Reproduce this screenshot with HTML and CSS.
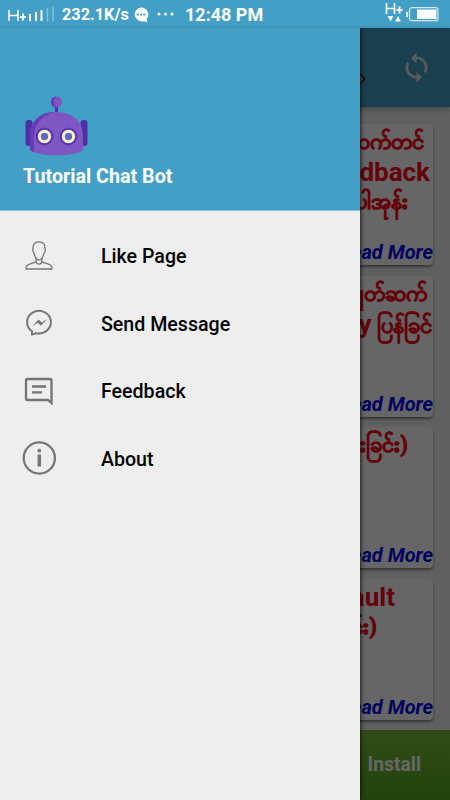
FILE: index.html
```html
<!DOCTYPE html>
<html lang="en">
<head>
    <meta charset="UTF-8">
    <meta name="viewport" content="width=device-width, initial-scale=1.0">
    <title>Tutorial Chat Bot</title>
    <link rel="stylesheet" href="styles.css">
</head>
<body>

    <!-- Status bar -->
    <div class="status-bar">
        <svg class="signal" width="48" height="16" viewBox="0 0 48 16">
            <path d="M1 3v11M10 3v11M1 8.500h9" stroke="#fff" stroke-width="1.500" fill="none"/>
            <path d="M15 6.500v7M12 10h6" stroke="#fff" stroke-width="2" fill="none"/>
            <path d="M22 14V7M28 14V5M33.500 14V3" stroke="#fff" stroke-width="2"/>
            <path d="M39.500 14V1M45 14V0" stroke="#fff" stroke-width="1.500" opacity=".35"/>
        </svg>
        <span class="speed">232.1K/s</span>
        <svg class="bubble" width="16" height="16" viewBox="0 0 16 16">
            <path d="M8 .5a7.500 7 0 1 0 3 13.700l3.500 1.300-.7-3.700A7 7 0 0 0 8 .5z" fill="#fff"/>
            <path d="M3.700 7.500h2M7 7.500h2M10.300 7.500h2" stroke="#439fc5" stroke-width="1.800"/>
        </svg>
        <svg class="dots" width="18" height="4" viewBox="0 0 18 4">
            <circle cx="2" cy="2" r="1.500" fill="#fff"/>
            <circle cx="8.500" cy="2" r="1.500" fill="#fff"/>
            <circle cx="15" cy="2" r="1.500" fill="#fff"/>
        </svg>
        <span class="clock">12:48 PM</span>
        <svg class="data" width="18" height="20" viewBox="0 0 18 20">
            <path d="M1.500 0v11M9.500 0v11M1.500 5.500h8" stroke="#fff" stroke-width="1.600" fill="none"/>
            <path d="M14.500 3.500v7M11.500 7h6" stroke="#fff" stroke-width="1.900" fill="none"/>
            <path d="M2.500 13h6l-3 5.500zM10 18.500h6L13 13z" fill="#fff"/>
        </svg>
        <svg class="battery" width="33" height="15" viewBox="0 0 33 15">
            <rect x="3.500" y=".7" width="28.500" height="13" rx="2.500" fill="none" stroke="#d5eaf3" stroke-width="1.200"/>
            <path d="M1 5v5" stroke="#fff" stroke-width="1.800"/>
            <rect x="11" y="2.500" width="19.500" height="9.500" fill="#fff"/>
        </svg>
    </div>

    <!-- Page under the drawer -->
    <main class="page">
        <header class="toolbar">
            <svg class="edit" width="30" height="20" viewBox="0 0 30 20">
                <path d="M18 5l6-.5 4.500 5.500-4.500 5H12" fill="#aaa" stroke="#222" stroke-width="1.500"/>
            </svg>
            <svg class="refresh" width="33" height="33" viewBox="0 0 24 24">
                <path fill="#e2e2e2" d="M12 4V1L8 5l4 4V6c3.310 0 6 2.690 6 6 0 1.010-.25 1.970-.7 2.800l1.460 1.460C19.540 15.030 20 13.570 20 12c0-4.420-3.580-8-8-8zm0 14c-3.310 0-6-2.690-6-6 0-1.010.25-1.970.7-2.800L5.240 7.740C4.460 8.970 4 10.430 4 12c0 4.420 3.580 8 8 8v3l4-4-4-4v3z"/>
            </svg>
        </header>

        <section class="cards">
            <article class="card">
                <h2 class="title inset-m">ဆက်တင်</h2>
                <h2 class="title latin">Feedback</h2>
                <h2 class="title inset-l">ပါအုန်း</h2>
                <a class="more">Read More</a>
            </article>
            <article class="card">
                <h2 class="title inset-s">ချတ်ဆက်</h2>
                <h2 class="title"><span class="word">Reply</span> ပြန်ခြင်</h2>
                <a class="more">Read More</a>
            </article>
            <article class="card">
                <h2 class="title inset-l">(ခြင်းခြင်း)</h2>
                <a class="more">Read More</a>
            </article>
            <article class="card">
                <h2 class="title latin inset-xl">Default</h2>
                <h2 class="title inset-xxl">(ခြင်း)</h2>
                <a class="more">Read More</a>
            </article>
        </section>

        <footer class="ad-bar">Install</footer>
        <div class="scrim"></div>
    </main>

    <!-- Navigation drawer -->
    <aside class="drawer">
        <div class="drawer-header">
            <svg class="robot" width="63" height="60" viewBox="0 0 63 60">
                <rect x="30" y="9" width="3" height="9" fill="#512da8"/>
                <circle cx="31.500" cy="6" r="5.500" fill="#7e57c2"/>
                <path d="M31.500.5a5.500 5.500 0 0 0 0 11 7 7 0 0 1 0-11z" fill="#673ab7"/>
                <rect x=".5" y="24" width="7" height="26" rx="3" fill="#512da8"/>
                <rect x="55.500" y="24" width="7" height="26" rx="3" fill="#512da8"/>
                <path d="M5 40C5 25 16 16 31.500 16S58 25 58 40v14c-6 7-47 7-53 0z" fill="#7e57c2"/>
                <path d="M5 54V40C5 25 16 16 29 16 16 20 9 29 9 40v16z" fill="#673ab7"/>
                <circle cx="19.500" cy="40.500" r="9" fill="#5e35b1"/>
                <circle cx="43.500" cy="40.500" r="9" fill="#5e35b1"/>
                <circle cx="19.500" cy="40.500" r="5.200" fill="#5c6bc0" stroke="#fff3c8" stroke-width="3"/>
                <circle cx="43.500" cy="40.500" r="5.200" fill="#5c6bc0" stroke="#fff3c8" stroke-width="3"/>
            </svg>
            <h1>Tutorial Chat Bot</h1>
        </div>
        <nav class="menu">
            <a class="menu-item">
                <svg width="34" height="34" viewBox="0 0 34 34" fill="none" stroke="#777" stroke-width="1.300">
                    <path d="M17 2.800c-4.500 0-6.300 2.700-6 7.200-.8 1 0 3.200 1 4 .5 3.500 3 7 5 7s4.500-3.500 5-7c1-.8 1.800-3 1-4 .3-4.500-1.500-7.200-6-7.200z"/>
                    <path d="M14.200 19v3.500c-2 1.800-7.500 2-9.200 4-.9 1-1 2-1 3.500h26c0-1.500-.1-2.500-1-3.500-1.700-2-7.200-2.200-9.200-4V19"/>
                    <path d="M14.200 22.500c.5 3.500 5.100 3.500 5.600 0"/>
                </svg>
                <span>Like Page</span>
            </a>
            <a class="menu-item">
                <svg width="34" height="34" viewBox="0 0 34 34">
                    <path d="M10 28.500V25.300A11.900 11.300 0 1 1 14.500 27.200z" fill="none" stroke="#777" stroke-width="2"/>
                    <path d="M10.500 20l6-6.500 3.300 3 5.200-3.500-6 6.700-3.200-3z" fill="#777"/>
                </svg>
                <span>Send Message</span>
            </a>
            <a class="menu-item">
                <svg width="34" height="34" viewBox="0 0 34 34" fill="none" stroke="#737373">
                    <path d="M30 28.500V6a1.500 1.500 0 0 0-1.500-1.500H6A1.500 1.500 0 0 0 4.500 6v18A1.500 1.500 0 0 0 6 25.500h20.500z" transform="translate(-.5 .5)" stroke-width="2.300"/>
                    <path d="M10 12.500h14M10 18.300h10" stroke-width="2.300"/>
                </svg>
                <span>Feedback</span>
            </a>
            <a class="menu-item">
                <svg width="34" height="34" viewBox="0 0 34 34">
                    <circle cx="17.300" cy="17" r="15.600" fill="none" stroke="#777" stroke-width="2.300"/>
                    <path d="M17.300 13.500v12" stroke="#777" stroke-width="3.500"/>
                    <circle cx="17.300" cy="9.700" r="1.900" fill="#777"/>
                </svg>
                <span>About</span>
            </a>
        </nav>
    </aside>

</body>
</html>
```
FILE: styles.css
```css
* {
    box-sizing: border-box;
}

body {
    margin: 0;
    width: 450px;
    height: 800px;
    overflow: hidden;
    position: relative;
    display: flex;
    flex-direction: column;
    font-family: Roboto, 'Noto Sans', sans-serif;
    background-color: #f0f0f0;
}

svg {
    display: block;
    flex-shrink: 0;
}

/* Status bar */
.status-bar {
    height: 28px;
    flex-shrink: 0;
    display: flex;
    align-items: center;
    padding: 0 11px 0 8px;
    background: #439fc5;
    color: #fff;
    font-weight: 700;
}

.signal {
    margin-top: 2px;
}

.speed {
    width: 71px;
    margin-left: 6px;
    font-size: 16.3px;
}

.bubble {
    margin-top: 1px;
}

.dots {
    margin-left: 8px;
}

.clock {
    margin-left: 10px;
    font-size: 18px;
}

.data {
    margin-left: auto;
    margin-top: -2px;
}

.battery {
    margin-left: 3px;
}

/* Page */
.page {
    flex: 1;
    position: relative;
    display: flex;
    flex-direction: column;
}

.toolbar {
    height: 79px;
    display: flex;
    align-items: center;
    justify-content: flex-end;
    gap: 34px;
    padding-right: 17px;
    background: #439fc5;
    box-shadow: 0 2px 6px rgba(0, 0, 0, 0.3);
}

.edit {
    margin-top: 22px;
}

.cards {
    flex: 1;
    display: flex;
    flex-direction: column;
    gap: 10.5px;
    padding: 17px 17px 0 16px;
}

.card {
    height: 141px;
    flex-shrink: 0;
    display: flex;
    flex-direction: column;
    align-items: flex-end;
    padding: 3px 0 0;
    background: #fff;
    border-radius: 4px;
    box-shadow: 0 2px 3px rgba(0, 0, 0, 0.45);
}

.title {
    margin: 0;
    padding-right: 1px;
    height: 30px;
    line-height: 30px;
    font-size: 22px;
    font-weight: 700;
    color: #fa0020;
    white-space: nowrap;
    -webkit-text-stroke: 0.7px #fa0020;
}

.latin {
    padding-right: 3px;
    font-size: 26px;
    -webkit-text-stroke: 0;
}

.word {
    font-size: 26px;
    -webkit-text-stroke: 0;
}

.inset-s {
    padding-right: 6px;
}

.inset-m {
    padding-right: 9px;
}

.inset-l {
    padding-right: 25px;
}

.inset-xl {
    padding-right: 38px;
}

.inset-xxl {
    padding-right: 56px;
}

.more {
    margin-top: auto;
    line-height: 26px;
    font-size: 20px;
    font-weight: 700;
    font-style: italic;
    color: #0000f0;
}

.ad-bar {
    height: 70px;
    padding-right: 29px;
    background: linear-gradient(#7cbd3c, #55a522);
    color: #fff;
    font-size: 19.3px;
    font-weight: 700;
    line-height: 70px;
    text-align: right;
}

.scrim {
    position: absolute;
    inset: 0;
    background: rgba(0, 0, 0, 0.6);
}

/* Drawer */
.drawer {
    position: absolute;
    top: 28px;
    left: 0;
    bottom: 0;
    width: 360px;
    background: #eee;
    box-shadow: 1px 0 4px rgba(0, 0, 0, 0.7);
    clip-path: inset(0 -8px 0 0);
}

.drawer-header {
    height: 183px;
    padding: 68px 0 0 25px;
    background: #439fc5;
    border-bottom: 1px solid #8cc3da;
}

.drawer-header h1 {
    margin: 9px 0 0 -2px;
    font-size: 19.7px;
    line-height: 24px;
    font-weight: 700;
    color: #fff;
}

.menu {
    padding-top: 11px;
}

.menu-item {
    height: 67.5px;
    display: flex;
    align-items: center;
    gap: 45px;
    padding-left: 22px;
    font-size: 19.6px;
    font-weight: 500;
    color: #000;
}

.menu-item span {
    padding-top: 2px;
}
```
